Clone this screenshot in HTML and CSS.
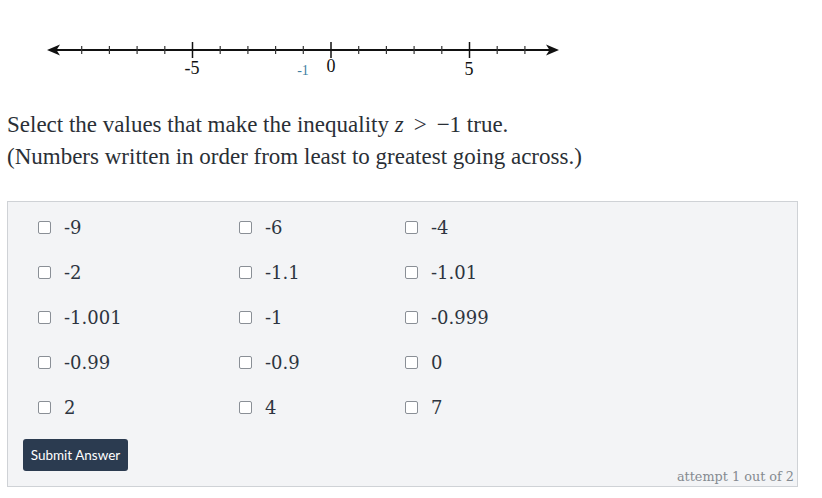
FILE: index.html
```html
<!DOCTYPE html>
<html>
<head>
<meta charset="utf-8">
<link rel="stylesheet" href="styles.css">
</head>
<body>
<div class="figure">
<svg class="numline" width="600" height="92" viewBox="0 0 600 92" xmlns="http://www.w3.org/2000/svg">
  <g stroke="#111" stroke-width="2" fill="none">
    <line x1="54" y1="50" x2="552" y2="50"/>
  </g>
  <path d="M47 50 L60 44.5 L56.5 50 L60 55.5 Z" fill="#111"/>
  <path d="M559 50 L546 44.5 L549.5 50 L546 55.5 Z" fill="#111"/>
  <g stroke="#333" stroke-width="1.2">
    <line x1="81.7" y1="46" x2="81.7" y2="54"/>
    <line x1="109.4" y1="46" x2="109.4" y2="54"/>
    <line x1="137.1" y1="46" x2="137.1" y2="54"/>
    <line x1="164.8" y1="46" x2="164.8" y2="54"/>
    <line x1="220.2" y1="46" x2="220.2" y2="54"/>
    <line x1="247.9" y1="46" x2="247.9" y2="54"/>
    <line x1="275.6" y1="46" x2="275.6" y2="54"/>
    <line x1="303.3" y1="46" x2="303.3" y2="54"/>
    <line x1="358.7" y1="46" x2="358.7" y2="54"/>
    <line x1="386.4" y1="46" x2="386.4" y2="54"/>
    <line x1="414.1" y1="46" x2="414.1" y2="54"/>
    <line x1="441.8" y1="46" x2="441.8" y2="54"/>
    <line x1="497.2" y1="46" x2="497.2" y2="54"/>
    <line x1="524.9" y1="46" x2="524.9" y2="54"/>
  </g>
  <g stroke="#111" stroke-width="1.5">
    <line x1="192.5" y1="42" x2="192.5" y2="58"/>
    <line x1="331" y1="42" x2="331" y2="58"/>
    <line x1="469.5" y1="42" x2="469.5" y2="58"/>
  </g>
  <g class="ticklabels" text-anchor="middle">
    <text x="192" y="74">-5</text>
    <text x="331" y="72">0</text>
    <text x="469" y="75">5</text>
  </g>
  <text class="marklabel" x="303" y="75" text-anchor="middle">-1</text>
</svg>
</div>

<p class="prompt">Select the values that make the inequality <span class="math"><i>z</i><span class="op">&gt;</span>−1</span> true.<br>(Numbers written in order from least to greatest going across.)</p>

<div class="panel">
  <div class="choices">
    <label class="choice"><input type="checkbox"><span>-9</span></label>
    <label class="choice"><input type="checkbox"><span>-6</span></label>
    <label class="choice"><input type="checkbox"><span>-4</span></label>
    <label class="choice"><input type="checkbox"><span>-2</span></label>
    <label class="choice"><input type="checkbox"><span>-1.1</span></label>
    <label class="choice"><input type="checkbox"><span>-1.01</span></label>
    <label class="choice"><input type="checkbox"><span>-1.001</span></label>
    <label class="choice"><input type="checkbox"><span>-1</span></label>
    <label class="choice"><input type="checkbox"><span>-0.999</span></label>
    <label class="choice"><input type="checkbox"><span>-0.99</span></label>
    <label class="choice"><input type="checkbox"><span>-0.9</span></label>
    <label class="choice"><input type="checkbox"><span>0</span></label>
    <label class="choice"><input type="checkbox"><span>2</span></label>
    <label class="choice"><input type="checkbox"><span>4</span></label>
    <label class="choice"><input type="checkbox"><span>7</span></label>
  </div>
  <button class="submit" type="button">Submit Answer</button>
  <div class="attempt">attempt 1 out of 2</div>
</div>
</body>
</html>
```

FILE: styles.css
```css
html, body {
  margin: 0;
  padding: 0;
  background: #ffffff;
}

body {
  font-family: "Liberation Serif", serif;
  color: #222;
}

.figure {
  height: 92px;
}

.numline {
  display: block;
}

.ticklabels {
  font-family: "Liberation Serif", serif;
  font-size: 18px;
  fill: #111;
}

.marklabel {
  font-family: "Liberation Serif", serif;
  font-size: 14px;
  fill: #3f7fa3;
}

.prompt {
  margin: 17px 0 0 7px;
  font-size: 23px;
  line-height: 32px;
  color: #2a2f36;
}

.math i {
  font-style: italic;
}

.math .op {
  padding: 0 10px;
}

.panel {
  margin: 28px 0 0 7px;
  width: 791px;
  height: 286px;
  box-sizing: border-box;
  background: #f3f4f6;
  border: 1px solid #cfd2d6;
  padding-top: 3px;
  position: relative;
}

.choices {
  display: grid;
  grid-template-columns: 201px 166px auto;
  grid-auto-rows: 45px;
  margin-left: 30px;
}

.choice {
  display: flex;
  align-items: center;
  gap: 13px;
  font-family: "DejaVu Serif", serif;
  font-size: 18px;
  color: #2d3440;
}

.choice input {
  margin: 0;
  width: 13px;
  height: 13px;
  appearance: none;
  -webkit-appearance: none;
  background: #fff;
  border: 1px solid #8a8f96;
  border-radius: 2px;
  box-sizing: border-box;
}

.submit {
  display: block;
  margin: 9px 0 0 15px;
  width: 105px;
  height: 32px;
  padding: 0;
  border: none;
  border-radius: 3px;
  background: #2b3b50;
  color: #ffffff;
  font-family: Lato, sans-serif;
  font-size: 13.5px;
}

.attempt {
  position: absolute;
  right: 3px;
  bottom: 2px;
  font-family: "DejaVu Serif", serif;
  font-size: 12.8px;
  color: #858a90;
}
```
